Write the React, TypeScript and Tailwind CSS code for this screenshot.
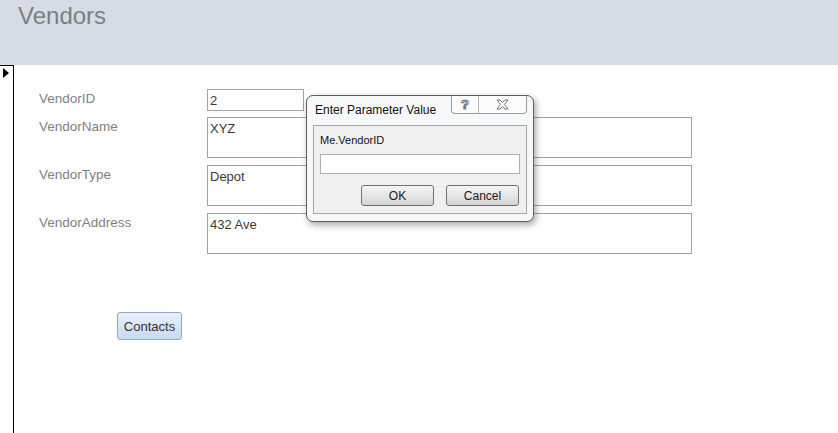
import React from 'react';

const labelCls = "w-[168px] shrink-0 pt-[2px] text-[13.5px] leading-4 text-[#7f7f7f]";
const boxCls = "border border-[#a3a3a3] bg-white px-[2px] pt-[3px] text-[13px] leading-4 text-[#3a3a3a]";

const FieldRow: React.FC<{ label: string; value: string; tall?: boolean }> = ({ label, value, tall = true }) => (
  <div className="flex">
    <div className={labelCls}>{label}</div>
    <div className={`${boxCls} ${tall ? 'w-[485px] h-[41px]' : 'w-[97px] h-[22px]'}`}>{value}</div>
  </div>
);

const DialogButton: React.FC<{ children: React.ReactNode }> = ({ children }) => (
  <button className="w-[73px] h-[21px] rounded-[3px] border border-[#707070] bg-gradient-to-b from-[#f4f4f4] via-[#e6e6e6] to-[#d2d2d2] text-[12px] leading-none text-[#1a1a1a]">
    {children}
  </button>
);

export default function App() {
  return (
    <div className="relative w-[838px] h-[433px] overflow-hidden bg-white font-['Liberation_Sans',Arial,sans-serif]">
      {/* form header */}
      <div className="h-[65px] bg-[#d6dce5] pl-[18px] pt-[2px]">
        <h1 className="text-[24px] leading-7 text-[#7f7f7f]">Vendors</h1>
      </div>

      <div className="flex h-[368px]">
        {/* record selector */}
        <div className="w-[14px] shrink-0 border-r border-black">
          <div className="h-[14px] border-t border-black pl-[3px] pt-[2px]">
            <svg width="6" height="10" viewBox="0 0 6 10" className="block">
              <polygon points="0,0 6,5 0,10" fill="#000" />
            </svg>
          </div>
        </div>

        {/* detail section */}
        <div className="flex flex-col pl-[25px] pt-[24px]">
          <div className="flex flex-col gap-[7px]">
            <div className="-mb-[1px]">
              <FieldRow label="VendorID" value="2" tall={false} />
            </div>
            <FieldRow label="VendorName" value="XYZ" />
            <FieldRow label="VendorType" value="Depot" />
            <FieldRow label="VendorAddress" value="432 Ave" />
          </div>
          <div className="pl-[78px] pt-[58px]">
            <button className="w-[65px] h-[28px] rounded-[3px] border border-[#8ea9d1] bg-gradient-to-b from-[#e9f0fa] to-[#c8d9f1] text-[13px] leading-none text-[#333]">
              Contacts
            </button>
          </div>
        </div>
      </div>

      {/* Enter Parameter Value dialog */}
      <div className="absolute left-[306px] top-[95px] w-[228px] h-[127px] rounded-[7px] border border-[#5c5c5c] bg-[#f7f8fa] shadow-[2px_3px_7px_rgba(0,0,0,0.35)] flex flex-col">
        <div className="h-[29px] flex items-start">
          <div className="pl-[8px] pt-[6px] text-[12px] leading-4 text-[#111]">Enter Parameter Value</div>
          <div className="ml-auto mr-[6px] flex h-[18px] rounded-b-[4px] border border-t-0 border-[#9c9c9c] bg-[#fbfbfb]">
            <div className="w-[27px] flex items-center justify-center border-r border-[#b5b5b5] text-[13px] font-bold leading-none text-white [-webkit-text-stroke:1px_#6f6f6f]">?</div>
            <div className="w-[47px] flex items-center justify-center">
              <svg width="13" height="11" viewBox="0 0 13 11">
                <polygon
                  points="1,1 4,1 6.5,3.5 9,1 12,1 8.5,5.5 12,10 9,10 6.5,7.5 4,10 1,10 4.5,5.5"
                  fill="#fff"
                  stroke="#6f6f6f"
                  strokeWidth="1"
                  strokeLinejoin="round"
                />
              </svg>
            </div>
          </div>
        </div>
        <div className="mx-[6px] h-[89px] border border-[#a5a5a5] bg-[#f0f0f0] px-[6px] pt-[6px]">
          <div className="text-[11px] leading-4 text-[#111]">Me.VendorID</div>
          <div className="mt-[6px] h-[20px] w-[200px] border border-[#abadb3] bg-white" />
          <div className="mt-[11px] flex justify-end gap-[12px] pr-[1px]">
            <DialogButton>OK</DialogButton>
            <DialogButton>Cancel</DialogButton>
          </div>
        </div>
      </div>
    </div>
  );
}
